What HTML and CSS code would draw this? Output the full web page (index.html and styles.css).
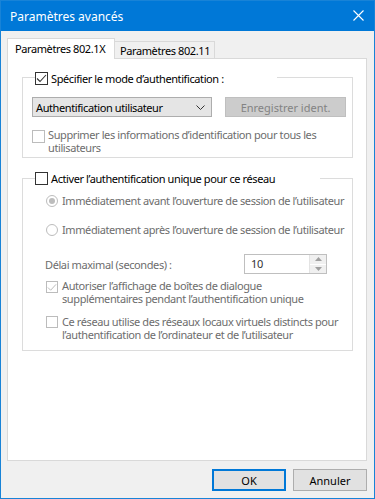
FILE: index.html
```html
<!DOCTYPE html>
<html lang="fr">
<head>
<meta charset="UTF-8">
<title>Paramètres avancés</title>
<link rel="stylesheet" href="styles.css">
</head>
<body>
<div class="window">
	<div class="titlebar">
		<span class="title">Paramètres avancés</span>
		<svg class="close" width="11" height="11" viewBox="0 0 11 11"><path d="M0.5 0.5L10.5 10.5M10.5 0.5L0.5 10.5" stroke="#fff" stroke-width="1.1" fill="none"/></svg>
	</div>
	<div class="body">
		<div class="tabs">
			<div class="tab active">Paramètres 802.1X</div>
			<div class="tab">Paramètres 802.11</div>
		</div>
		<div class="pane">
			<div class="group group-auth">
				<div class="group-head">
					<span class="check on"><svg width="11" height="11" viewBox="0 0 11 11"><path d="M1 5.5L4 8.5L10 2" stroke="#333" stroke-width="1.1" fill="none"/></svg></span>
					<span>Spécifier le mode d’authentification :</span>
				</div>
				<div class="combo-row">
					<div class="combo">
						<span>Authentification utilisateur</span>
						<svg width="9" height="5" viewBox="0 0 9 5"><path d="M0.5 0.5L4.5 4.5L8.5 0.5" stroke="#333" fill="none"/></svg>
					</div>
					<button class="btn btn-off">Enregistrer ident.</button>
				</div>
				<div class="option off first">
					<span class="check"></span>
					<span class="label">Supprimer les informations d’identification pour tous les<br>utilisateurs</span>
				</div>
			</div>

			<div class="group group-sso">
				<div class="group-head">
					<span class="check"></span>
					<span>Activer l’authentification unique pour ce réseau</span>
				</div>
				<div class="radio-row off first">
					<span class="radio on"></span>
					<span>Immédiatement avant l’ouverture de session de l’utilisateur</span>
				</div>
				<div class="radio-row off second">
					<span class="radio"></span>
					<span>Immédiatement après l’ouverture de session de l’utilisateur</span>
				</div>
				<div class="delay-row off">
					<span>Délai maximal (secondes) :</span>
					<div class="spin">
						<span class="spin-value">10</span>
						<div class="spin-btns">
							<span class="spin-up"><svg width="7" height="4" viewBox="0 0 7 4"><path d="M0 4L3.5 0L7 4Z" fill="#a0a0a0"/></svg></span>
							<span class="spin-down"><svg width="7" height="4" viewBox="0 0 7 4"><path d="M0 0L3.5 4L7 0Z" fill="#a0a0a0"/></svg></span>
						</div>
					</div>
				</div>
				<div class="option off allow">
					<span class="check"><svg width="11" height="11" viewBox="0 0 11 11"><path d="M1 5.5L4 8.5L10 2" stroke="#bcbcbc" stroke-width="1.1" fill="none"/></svg></span>
					<span class="label">Autoriser l’affichage de boîtes de dialogue<br>supplémentaires pendant l’authentification unique</span>
				</div>
				<div class="option off vlan">
					<span class="check"></span>
					<span class="label">Ce réseau utilise des réseaux locaux virtuels distincts pour<br>l’authentification de l’ordinateur et de l’utilisateur</span>
				</div>
			</div>
		</div>
		<div class="footer">
			<button class="btn btn-default">OK</button>
			<button class="btn">Annuler</button>
		</div>
	</div>
</div>
</body>
</html>
```

FILE: styles.css
```css
*{margin:0;padding:0;box-sizing:border-box;}
html,body{width:375px;height:499px;overflow:hidden;}
body{
	font-family:"Noto Sans","Open Sans",sans-serif;
	font-size:11px;
	letter-spacing:-0.4px;
	color:#000;
	background:#f0f0f0;
}
.window{
	width:375px;
	height:499px;
	border:1px solid #1883d7;
	display:flex;
	flex-direction:column;
	background:#f0f0f0;
}
.titlebar{
	height:30px;
	background:#0078d7;
	color:#fff;
	display:flex;
	align-items:center;
	padding:0 10px 0 9px;
	flex-shrink:0;
}
.title{font-size:12px;letter-spacing:0;flex:1;}
.close{margin-top:-1px;}

.body{padding:7px 7px 0 6px;flex:1;display:flex;flex-direction:column;}

.tabs{display:flex;align-items:flex-end;height:21px;margin-bottom:-1px;}
.tab{
	border:1px solid #d9d9d9;
	border-bottom:none;
	white-space:nowrap;
	line-height:16px;
}
.tab.active{
	height:21px;
	width:108px;
	background:#fff;
	padding:2px 0 0 7px;
	position:relative;
	z-index:1;
}
.tab:not(.active){
	height:18px;
	width:101px;
	margin-left:-1px;
	border-bottom:1px solid #d9d9d9;
	padding:1px 0 0 5px;
	line-height:15px;
}

.pane{
	width:360px;
	height:403px;
	background:#fff;
	border:1px solid #d9d9d9;
	padding:18px 13px 0 14px;
}

.group{border:1px solid #dcdcdc;}
.group-head{
	display:flex;
	align-items:center;
	height:13px;
	margin-top:-6px;
	background:#fff;
	white-space:nowrap;
}
.group-auth .group-head{width:242px;margin-left:3px;}
.group-sso .group-head{width:285px;margin-top:-7px;margin-left:-11px;}
.group-head span:last-child{margin-left:3px;}

.check{
	width:13px;
	height:13px;
	border:1px solid #333;
	background:#fff;
	display:flex;
	align-items:center;
	justify-content:center;
	flex-shrink:0;
}
.off .check{border-color:#bcbcbc;}

.group-auth{padding:0 0 3px 9px;}
.combo-row{display:flex;margin-top:12px;}
.combo{
	width:180px;
	height:20px;
	border:1px solid #adadad;
	background:#e5e5e5;
	display:flex;
	align-items:center;
	justify-content:space-between;
	padding:0 6px 0 3px;
}
.btn{
	font:inherit;
	height:20px;
	border:1px solid #adadad;
	background:#e1e1e1;
	color:#000;
}
.btn-off{
	width:121px;
	margin-left:13px;
	background:#cccccc;
	border-color:#bfbfbf;
	color:#838383;
}

.option{display:flex;align-items:flex-start;margin-top:11px;}
.option .check{margin-top:2px;}
.option .label{margin-left:3px;line-height:13px;white-space:nowrap;}
.off{color:#6d6d6d;}

.group-sso{margin-top:20px;padding:0 0 9px 23px;}
.radio-row{display:flex;align-items:center;height:13px;white-space:nowrap;}
.radio-row.first{margin-top:9px;}
.radio-row.second{margin-top:16px;}
.radio-row span:last-child{margin-left:4px;}
.radio{
	width:12px;
	height:12px;
	flex-shrink:0;
	border:1px solid #bcbcbc;
	border-radius:50%;
	display:flex;
	align-items:center;
	justify-content:center;
}
.radio.on::after{
	content:'';
	width:6px;
	height:6px;
	border-radius:50%;
	background:#bcbcbc;
}

.delay-row{display:flex;align-items:center;margin-top:18px;margin-left:-1px;}
.delay-row>span{width:199px;}
.spin{
	width:83px;
	height:20px;
	border:1px solid #bfbfbf;
	display:flex;
}
.spin-value{flex:1;padding-left:6px;line-height:18px;color:#333;}
.spin-btns{width:17px;display:flex;flex-direction:column;border-left:1px solid #e3e3e3;}
.spin-btns span{
	flex:1;
	background:#f0f0f0;
	display:flex;
	align-items:center;
	justify-content:center;
}
.spin-up{border-bottom:1px solid #fff;}

.allow{margin-top:5px;}
.vlan{margin-top:10px;}
.allow .label,.vlan .label{margin-left:4px;}
.allow .check,.vlan .check{width:12px;height:12px;}
.vlan .check{margin-top:1px;}

.footer{
	display:flex;
	justify-content:flex-end;
	gap:7px;
	padding:8px 0 0;
}
.btn-default,.footer .btn{width:74px;height:22px;}
.btn-default{border:2px solid #0078d7;}
```
